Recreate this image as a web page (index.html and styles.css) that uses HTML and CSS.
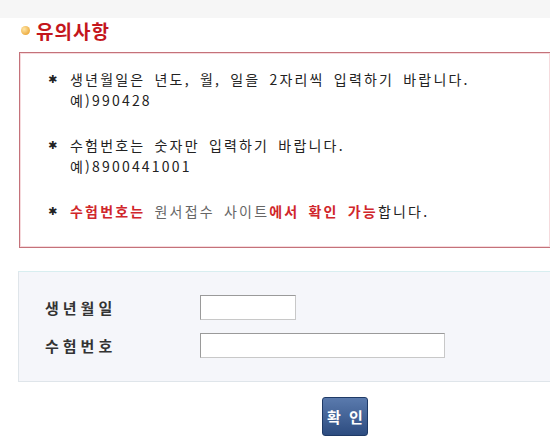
FILE: index.html
```html
<!DOCTYPE html>
<html lang="ko">
    <head>
        <meta charset="UTF-8" />
        <title>유의사항</title>
        <link rel="stylesheet" href="styles.css">
    </head>
    <body>
        <div class="topbar"></div>
        <div class="content">
            <h2 class="title"><span class="dot"></span>유의사항</h2>

            <div class="notice">
                <ul>
                    <li>생년월일은 년도, 월, 일을 2자리씩 입력하기 바랍니다.<br />예)990428</li>
                    <li>수험번호는 숫자만 입력하기 바랍니다.<br />예)8900441001</li>
                    <li><b class="red">수험번호는</b> <span class="gray">원서접수 사이트</span><b class="red">에서 확인 가능</b>합니다.</li>
                </ul>
            </div>

            <form class="login">
                <div class="row">
                    <label for="birth">생년월일</label>
                    <input type="text" id="birth" class="short" />
                </div>
                <div class="row">
                    <label for="examNo">수험번호</label>
                    <input type="text" id="examNo" class="long" />
                </div>
            </form>

            <div class="actions">
                <button type="button">확 인</button>
            </div>
        </div>
    </body>
</html>
```

FILE: styles.css
```css
body {
    margin: 0;
    font-family: "Noto Sans CJK KR", "Noto Sans", sans-serif;
    font-size: 14px;
    color: #333;
    background: #fff;
}
.topbar {
    height: 18px;
    background: #f6f6f6;
}
.content {
    padding-left: 18px;
}
.title {
    display: flex;
    align-items: center;
    margin: 0 0 0 3px;
    height: 24px;
    font-size: 19px;
    font-weight: bold;
    color: #c4161c;
    letter-spacing: 1px;
}
.dot {
    width: 9px;
    height: 9px;
    border-radius: 50%;
    background: radial-gradient(circle at 35% 35%, #ffe6a6, #e6961a);
    margin-right: 6px;
}
.notice {
    margin: 10px 0 0 1px;
    height: 194px;
    border: 1px solid #c4727a;
    border-right: none;
    box-shadow: inset 0 0 0 1px #f6dadd;
    background: #fff;
}
.notice ul {
    list-style: none;
    margin: 0;
    padding: 16px 0 0 28px;
}
.notice li {
    position: relative;
    padding-left: 22px;
    line-height: 21px;
    margin-bottom: 24px;
    color: #222;
    letter-spacing: 2.2px;
    word-spacing: 3px;
}
.notice li::before {
    content: "✱";
    position: absolute;
    left: 0;
    top: 0;
    font-family: "DejaVu Sans", sans-serif;
    font-size: 11px;
    color: #222;
}
.red {
    color: #d0262b;
}
.gray {
    color: #666;
}
.login {
    margin-top: 23px;
    height: 111px;
    box-sizing: border-box;
    border: 1px solid #dfe5ea;
    border-right: none;
    border-top-color: #d8eef0;
    background: #f5f6fa;
    padding: 23px 0 0 26px;
}
.row {
    display: flex;
    align-items: center;
    height: 25px;
    margin-bottom: 13px;
}
.row label {
    width: 155px;
    font-weight: bold;
    font-size: 15px;
    letter-spacing: 4px;
    color: #333;
}
.row input {
    box-sizing: border-box;
    height: 25px;
    border: 1px solid #c8c8c8;
    border-top-color: #9a9a9a;
    border-left-color: #9a9a9a;
    background: #fff;
}
.short {
    width: 96px;
}
.long {
    width: 245px;
}
.actions {
    display: flex;
    padding-left: 304px;
    margin-top: 15px;
}
.actions button {
    width: 46px;
    height: 39px;
    border: 1px solid #1f3a66;
    border-radius: 3px;
    background: linear-gradient(#5a7aad, #2d4c80);
    color: #fff;
    font-family: inherit;
    font-size: 15px;
    font-weight: bold;
    letter-spacing: 2px;
    padding: 0 0 0 2px;
    cursor: pointer;
}
```
